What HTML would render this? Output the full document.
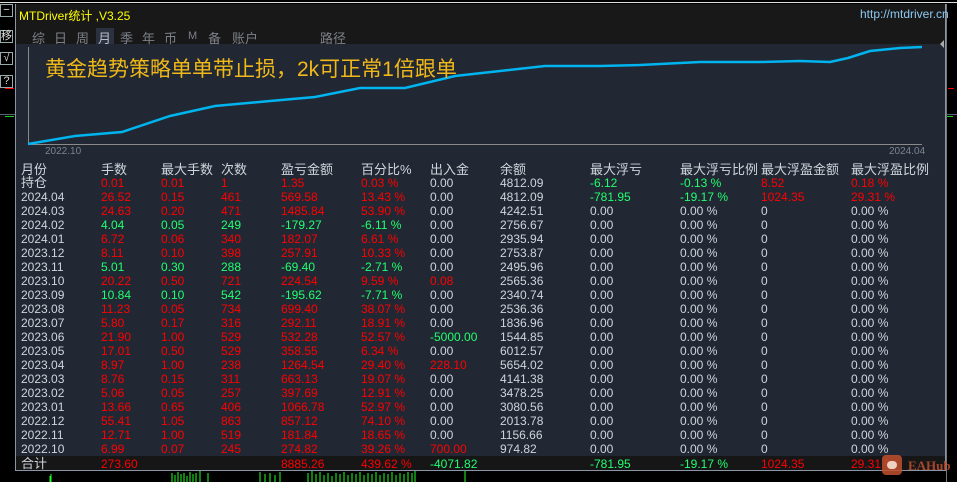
<!DOCTYPE html>
<html><head><meta charset="utf-8"><style>
*{margin:0;padding:0;box-sizing:border-box}
body{width:957px;height:482px;background:#000;position:relative;overflow:hidden;font-family:"Liberation Sans","Noto Sans CJK SC",sans-serif;font-size:12px;color:#d0d4dc}
.a{position:absolute}
.btn{position:absolute;left:0;width:13px;height:13px;border:1px solid #9aa;color:#ddd;font-size:11px;line-height:11px;text-align:center;background:#000}
.r{position:absolute;left:16px;height:14px;line-height:14px;white-space:nowrap}
.r span{position:absolute;top:0}
.R{color:#ff0000}.G{color:#20ff70}
.c0{left:5px}.c1{left:85px}.c2{left:145px}.c3{left:205px}.c4{left:265px}.c5{left:345px}.c6{left:414px}.c7{left:484px}.c8{left:574px}.c9{left:664px}.c10{left:745px}.c11{left:835px}
.tab{position:absolute;top:28px;color:#7c8088;font-size:13px}
</style></head><body>
<div class="a" style="left:0;top:2px;width:957px;height:1px;background:#ddd"></div>
<div class="btn" style="top:4px">−</div>
<div class="btn" style="top:30px">移</div>
<div class="btn" style="top:52px">√</div>
<div class="btn" style="top:75px">?</div>
<div class="a" style="left:5px;top:88px;width:9px;height:1px;background:#f00"></div>
<div class="a" style="left:5px;top:116px;width:9px;height:1px;background:#2c2"></div>
<div class="a" style="left:0;top:114px;width:15px;height:1px;background:#567"></div>
<div class="a" style="left:946px;top:4px;width:1px;height:478px;background:#777"></div>
<div class="a" style="left:948px;top:88px;width:6px;height:1px;background:#f00"></div>
<div class="a" style="left:947px;top:114px;width:10px;height:1px;background:#567"></div>
<div class="a" style="left:947px;top:116px;width:6px;height:1px;background:#2c2"></div>
<div class="a" style="left:15px;top:4px;width:931px;height:467px;background:#212833;border-left:1px solid #8a96a8;border-right:1px solid #8a96a8;border-bottom:1px solid #8a96a8"></div>
<div class="a" style="left:16px;top:4px;width:929px;height:40px;background:#181818"></div>
<div class="a" style="left:19px;top:7px;color:#ffff00;font-size:12px">MTDriver统计 ,V3.25</div>
<div class="a" style="left:860px;top:7px;color:#8cc8f0;font-size:12px">http://mtdriver.cn</div>
<div class="a" style="left:96px;top:28px;width:18px;height:16px;background:#2a3240"></div>
<span class="tab" style="left:32px">综</span><span class="tab" style="left:54px">日</span><span class="tab" style="left:76px">周</span><span class="tab" style="left:98px;color:#b8bcc4">月</span><span class="tab" style="left:120px">季</span><span class="tab" style="left:142px">年</span><span class="tab" style="left:164px">币</span><span class="tab" style="left:188px;font-size:11px;top:30px">M</span><span class="tab" style="left:208px">备</span><span class="tab" style="left:232px">账户</span><span class="tab" style="left:320px">路径</span>
<svg class="a" style="left:0;top:0" width="957" height="160">
<line x1="28.5" y1="47" x2="28.5" y2="145" stroke="#8a8a8a"/>
<line x1="28" y1="144.5" x2="922" y2="144.5" stroke="#8a8a8a"/>
<polygon points="944,40 940,44 944,48" fill="#aaa"/>
<polyline fill="none" stroke="#00b4f0" stroke-width="2.5" points="28,144 75,136 122,132 170,116 215,106 270,101 315,97 360,88 405,88 455,76 500,71 545,66 600,66 640,65 700,62 760,62 800,61 830,62 848,58 870,51 900,48 922,47"/>
</svg>
<div class="a" style="left:45px;top:53px;color:#f0b818;font-size:21px">黄金趋势策略单单带止损，2k可正常1倍跟单</div>
<div class="a" style="left:45px;top:146px;color:#7c8490;font-size:10px">2022.10</div>
<div class="a" style="left:889px;top:146px;color:#7c8490;font-size:10px">2024.04</div>
<div class="r" style="top:163px;font-size:13px"><span class="c0">月份</span><span class="c1">手数</span><span class="c2">最大手数</span><span class="c3">次数</span><span class="c4">盈亏金额</span><span class="c5">百分比%</span><span class="c6">出入金</span><span class="c7">余额</span><span class="c8">最大浮亏</span><span class="c9">最大浮亏比例</span><span class="c10">最大浮盈金额</span><span class="c11">最大浮盈比例</span></div>
<div class="r" style="top:176px"><span class="c0" style="font-size:13px">持仓</span><span class="c1 R">0.01</span><span class="c2 R">0.01</span><span class="c3 R">1</span><span class="c4 R">1.35</span><span class="c5 R">0.03 %</span><span class="c6">0.00</span><span class="c7">4812.09</span><span class="c8 G">-6.12</span><span class="c9 G">-0.13 %</span><span class="c10 R">8.52</span><span class="c11 R">0.18 %</span></div>
<div class="r" style="top:190px"><span class="c0">2024.04</span><span class="c1 R">26.52</span><span class="c2 R">0.15</span><span class="c3 R">461</span><span class="c4 R">569.58</span><span class="c5 R">13.43 %</span><span class="c6">0.00</span><span class="c7">4812.09</span><span class="c8 G">-781.95</span><span class="c9 G">-19.17 %</span><span class="c10 R">1024.35</span><span class="c11 R">29.31 %</span></div>
<div class="r" style="top:204px"><span class="c0">2024.03</span><span class="c1 R">24.63</span><span class="c2 R">0.20</span><span class="c3 R">471</span><span class="c4 R">1485.84</span><span class="c5 R">53.90 %</span><span class="c6">0.00</span><span class="c7">4242.51</span><span class="c8">0.00</span><span class="c9">0.00 %</span><span class="c10">0</span><span class="c11">0.00 %</span></div>
<div class="r" style="top:218px"><span class="c0">2024.02</span><span class="c1 G">4.04</span><span class="c2 G">0.05</span><span class="c3 G">249</span><span class="c4 G">-179.27</span><span class="c5 G">-6.11 %</span><span class="c6">0.00</span><span class="c7">2756.67</span><span class="c8">0.00</span><span class="c9">0.00 %</span><span class="c10">0</span><span class="c11">0.00 %</span></div>
<div class="r" style="top:232px"><span class="c0">2024.01</span><span class="c1 R">6.72</span><span class="c2 R">0.06</span><span class="c3 R">340</span><span class="c4 R">182.07</span><span class="c5 R">6.61 %</span><span class="c6">0.00</span><span class="c7">2935.94</span><span class="c8">0.00</span><span class="c9">0.00 %</span><span class="c10">0</span><span class="c11">0.00 %</span></div>
<div class="r" style="top:246px"><span class="c0">2023.12</span><span class="c1 R">8.11</span><span class="c2 R">0.10</span><span class="c3 R">398</span><span class="c4 R">257.91</span><span class="c5 R">10.33 %</span><span class="c6">0.00</span><span class="c7">2753.87</span><span class="c8">0.00</span><span class="c9">0.00 %</span><span class="c10">0</span><span class="c11">0.00 %</span></div>
<div class="r" style="top:260px"><span class="c0">2023.11</span><span class="c1 G">5.01</span><span class="c2 G">0.30</span><span class="c3 G">288</span><span class="c4 G">-69.40</span><span class="c5 G">-2.71 %</span><span class="c6">0.00</span><span class="c7">2495.96</span><span class="c8">0.00</span><span class="c9">0.00 %</span><span class="c10">0</span><span class="c11">0.00 %</span></div>
<div class="r" style="top:274px"><span class="c0">2023.10</span><span class="c1 R">20.22</span><span class="c2 R">0.50</span><span class="c3 R">721</span><span class="c4 R">224.54</span><span class="c5 R">9.59 %</span><span class="c6 R">0.08</span><span class="c7">2565.36</span><span class="c8">0.00</span><span class="c9">0.00 %</span><span class="c10">0</span><span class="c11">0.00 %</span></div>
<div class="r" style="top:288px"><span class="c0">2023.09</span><span class="c1 G">10.84</span><span class="c2 G">0.10</span><span class="c3 G">542</span><span class="c4 G">-195.62</span><span class="c5 G">-7.71 %</span><span class="c6">0.00</span><span class="c7">2340.74</span><span class="c8">0.00</span><span class="c9">0.00 %</span><span class="c10">0</span><span class="c11">0.00 %</span></div>
<div class="r" style="top:302px"><span class="c0">2023.08</span><span class="c1 R">11.23</span><span class="c2 R">0.05</span><span class="c3 R">734</span><span class="c4 R">699.40</span><span class="c5 R">38.07 %</span><span class="c6">0.00</span><span class="c7">2536.36</span><span class="c8">0.00</span><span class="c9">0.00 %</span><span class="c10">0</span><span class="c11">0.00 %</span></div>
<div class="r" style="top:316px"><span class="c0">2023.07</span><span class="c1 R">5.80</span><span class="c2 R">0.17</span><span class="c3 R">316</span><span class="c4 R">292.11</span><span class="c5 R">18.91 %</span><span class="c6">0.00</span><span class="c7">1836.96</span><span class="c8">0.00</span><span class="c9">0.00 %</span><span class="c10">0</span><span class="c11">0.00 %</span></div>
<div class="r" style="top:330px"><span class="c0">2023.06</span><span class="c1 R">21.90</span><span class="c2 R">1.00</span><span class="c3 R">529</span><span class="c4 R">532.28</span><span class="c5 R">52.57 %</span><span class="c6 G">-5000.00</span><span class="c7">1544.85</span><span class="c8">0.00</span><span class="c9">0.00 %</span><span class="c10">0</span><span class="c11">0.00 %</span></div>
<div class="r" style="top:344px"><span class="c0">2023.05</span><span class="c1 R">17.01</span><span class="c2 R">0.50</span><span class="c3 R">529</span><span class="c4 R">358.55</span><span class="c5 R">6.34 %</span><span class="c6">0.00</span><span class="c7">6012.57</span><span class="c8">0.00</span><span class="c9">0.00 %</span><span class="c10">0</span><span class="c11">0.00 %</span></div>
<div class="r" style="top:358px"><span class="c0">2023.04</span><span class="c1 R">8.97</span><span class="c2 R">1.00</span><span class="c3 R">238</span><span class="c4 R">1264.54</span><span class="c5 R">29.40 %</span><span class="c6 R">228.10</span><span class="c7">5654.02</span><span class="c8">0.00</span><span class="c9">0.00 %</span><span class="c10">0</span><span class="c11">0.00 %</span></div>
<div class="r" style="top:372px"><span class="c0">2023.03</span><span class="c1 R">8.76</span><span class="c2 R">0.15</span><span class="c3 R">311</span><span class="c4 R">663.13</span><span class="c5 R">19.07 %</span><span class="c6">0.00</span><span class="c7">4141.38</span><span class="c8">0.00</span><span class="c9">0.00 %</span><span class="c10">0</span><span class="c11">0.00 %</span></div>
<div class="r" style="top:386px"><span class="c0">2023.02</span><span class="c1 R">5.06</span><span class="c2 R">0.05</span><span class="c3 R">257</span><span class="c4 R">397.69</span><span class="c5 R">12.91 %</span><span class="c6">0.00</span><span class="c7">3478.25</span><span class="c8">0.00</span><span class="c9">0.00 %</span><span class="c10">0</span><span class="c11">0.00 %</span></div>
<div class="r" style="top:400px"><span class="c0">2023.01</span><span class="c1 R">13.66</span><span class="c2 R">0.65</span><span class="c3 R">406</span><span class="c4 R">1066.78</span><span class="c5 R">52.97 %</span><span class="c6">0.00</span><span class="c7">3080.56</span><span class="c8">0.00</span><span class="c9">0.00 %</span><span class="c10">0</span><span class="c11">0.00 %</span></div>
<div class="r" style="top:414px"><span class="c0">2022.12</span><span class="c1 R">55.41</span><span class="c2 R">1.05</span><span class="c3 R">863</span><span class="c4 R">857.12</span><span class="c5 R">74.10 %</span><span class="c6">0.00</span><span class="c7">2013.78</span><span class="c8">0.00</span><span class="c9">0.00 %</span><span class="c10">0</span><span class="c11">0.00 %</span></div>
<div class="r" style="top:428px"><span class="c0">2022.11</span><span class="c1 R">12.71</span><span class="c2 R">1.00</span><span class="c3 R">519</span><span class="c4 R">181.84</span><span class="c5 R">18.65 %</span><span class="c6">0.00</span><span class="c7">1156.66</span><span class="c8">0.00</span><span class="c9">0.00 %</span><span class="c10">0</span><span class="c11">0.00 %</span></div>
<div class="r" style="top:442px"><span class="c0">2022.10</span><span class="c1 R">6.99</span><span class="c2 R">0.07</span><span class="c3 R">245</span><span class="c4 R">274.82</span><span class="c5 R">39.26 %</span><span class="c6 R">700.00</span><span class="c7">974.82</span><span class="c8">0.00</span><span class="c9">0.00 %</span><span class="c10">0</span><span class="c11">0.00 %</span></div>
<div class="a" style="left:16px;top:456px;width:929px;height:14px;background:#161616"></div>
<div class="r" style="top:457px"><span class="c0" style="font-size:13px">合计</span><span class="c1 R">273.60</span><span class="c4 R">8885.26</span><span class="c5 R">439.62 %</span><span class="c6 G">-4071.82</span><span class="c8 G">-781.95</span><span class="c9 G">-19.17 %</span><span class="c10 R">1024.35</span><span class="c11 R">29.31 %</span></div>
<svg class="a" style="left:0;top:471px" width="957" height="11">
<g stroke="#20ff20" stroke-width="1">
<path d="M172 2v9M175 4v7M178 1v10M181 3v8M184 2v9M187 5v6M190 1v10M193 3v8M196 2v9M200 0v11M208 2v9M260 1v10M265 3v8M270 2v9M275 4v7M280 1v10M308 2v9M312 0v11M316 3v8M320 1v10M324 4v7M328 2v9M332 5v6M336 2v9M340 3v8M344 1v10M348 4v7M352 2v9M356 3v8M360 1v10M364 4v7M368 2v9M372 3v8M376 1v10M380 4v7M384 2v9M388 3v8M392 1v10M396 4v7M400 2v9M404 3v8M408 1v10M412 2v9M415 0v11M465 0v11M50 5v6M51 3v8"/>
</g>
</svg>
<div class="a" style="left:882px;top:455px;width:20px;height:20px;background:#c05030;border-radius:4px;opacity:.85"></div>
<div class="a" style="left:887px;top:461px;width:10px;height:8px;background:#f0d0c0;border-radius:4px"></div>
<div class="a" style="left:908px;top:458px;color:#c05030;font-family:'Liberation Serif',serif;font-size:13px;font-weight:bold;opacity:.85">EAHub</div>
</body></html>
